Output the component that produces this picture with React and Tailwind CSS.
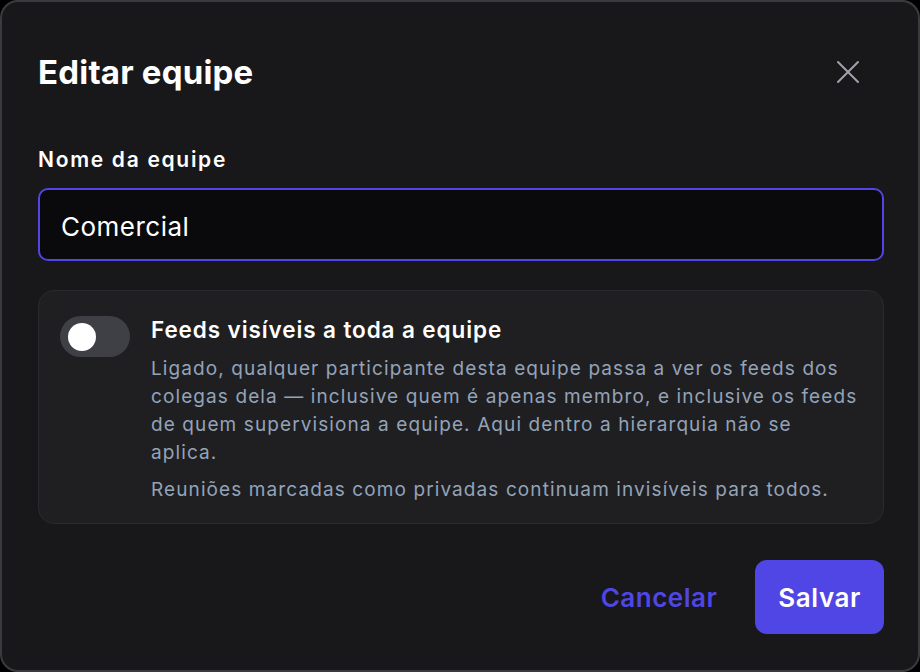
import React from "react";

export default function App() {
  return (
    <div className="w-[920px] h-[672px] bg-black" style={{ fontFamily: "Inter, 'Noto Sans', sans-serif" }}>
      <div className="h-full rounded-[18px] border-2 border-[#3a3a3f] bg-[#18181b] pl-[36px] pr-[34px] pt-[52px] pb-[36px] flex flex-col">
        <div className="flex items-center justify-between h-[36px]">
          <h1 className="text-[33px] leading-[36px] font-bold text-white tracking-[0.2px]">Editar equipe</h1>
          <button className="w-[40px] h-[40px] mr-[16px] flex items-center justify-center text-[#a1a1aa]">
            <svg width="24" height="24" viewBox="0 0 24 24" fill="none" stroke="currentColor" strokeWidth="2" strokeLinecap="round">
              <path d="M2 2 L22 22 M22 2 L2 22" />
            </svg>
          </button>
        </div>

        <label className="mt-[56px] text-[21px] leading-[28px] font-semibold text-white tracking-[1.7px]">Nome da equipe</label>
        <div className="mt-[14px] h-[73px] rounded-[10px] border-2 border-[#5046e4] bg-[#0a0a0c] flex items-center px-[21px] pt-[3px]">
          <span className="text-[26px] text-white tracking-[0.5px]">Comercial</span>
        </div>

        <div className="mt-[29px] rounded-[16px] border border-[#2a2a2e] bg-[#1f1f22] pl-[21px] pr-[24px] pt-[25px] pb-[19px] flex gap-[21px]">
          <div className="w-[70px] h-[41px] shrink-0 rounded-full bg-[#3f3f46] flex items-center pl-[8px]">
            <div className="w-[28px] h-[28px] rounded-full bg-white" />
          </div>
          <div className="flex-1">
            <div className="text-[22.5px] leading-[28px] font-semibold text-white tracking-[0.9px]">Feeds visíveis a toda a equipe</div>
            <p className="mt-[11px] text-[19px] leading-[28px] text-[#94a3b8] tracking-[1.1px]">
              Ligado, qualquer participante desta equipe passa a ver os feeds dos colegas dela — inclusive quem é apenas membro, e inclusive os feeds de quem supervisiona a equipe. Aqui dentro a hierarquia não se aplica.
            </p>
            <p className="mt-[9px] text-[19px] leading-[28px] text-[#94a3b8] tracking-[1.1px]">
              Reuniões marcadas como privadas continuam invisíveis para todos.
            </p>
          </div>
        </div>

        <div className="mt-auto flex justify-end items-center gap-[15px]">
          <button className="h-[74px] px-[23px] text-[26px] font-semibold text-[#5046e4] tracking-[0.5px]">Cancelar</button>
          <button className="h-[74px] px-[23px] rounded-[12px] bg-[#4f46e5] text-[26px] font-semibold text-white tracking-[0.6px]">Salvar</button>
        </div>
      </div>
    </div>
  );
}
